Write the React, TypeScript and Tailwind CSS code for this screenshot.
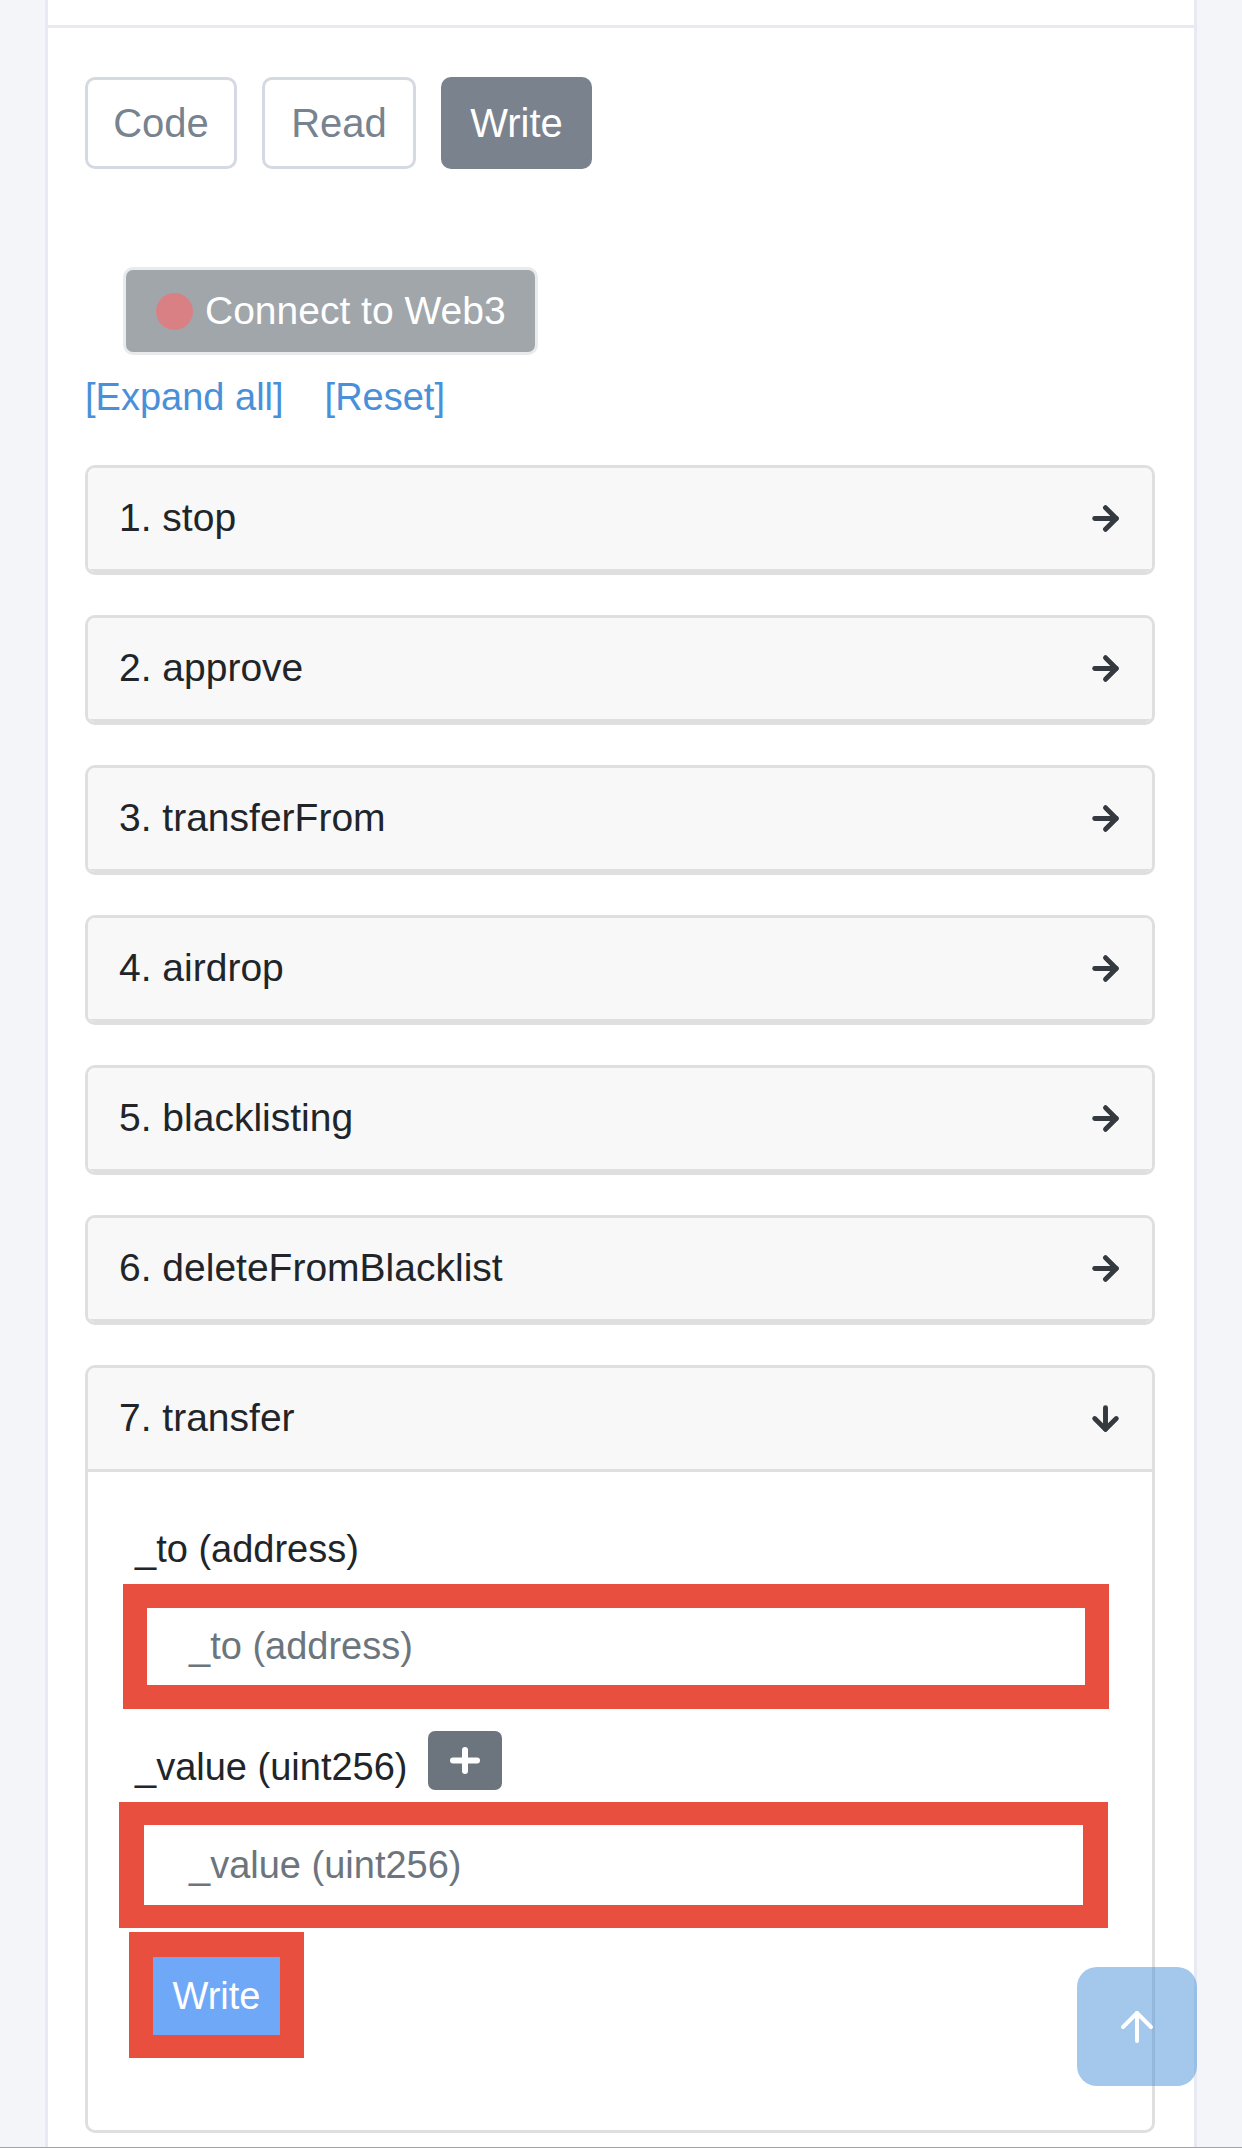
import { ArrowDown, ArrowRight, ArrowUp } from "lucide-react";

const methods = [
  "1. stop",
  "2. approve",
  "3. transferFrom",
  "4. airdrop",
  "5. blacklisting",
  "6. deleteFromBlacklist",
];

const tabs = [
  { label: "Code", w: "w-[152px]", active: false },
  { label: "Read", w: "w-[154px]", active: false },
  { label: "Write", w: "w-[151px]", active: true },
];

const MethodHeader = ({ name, open }: { name: string; open?: boolean }) => (
  <div className="h-[104px] flex items-center justify-between pl-[31px] pr-[28px] bg-[#f8f8f8] border-b-[3px] border-[#dfdfdf]">
    <span className="text-[39px] text-[#212529]">{name}</span>
    {open ? (
      <ArrowDown size={37} strokeWidth={3.2} className="text-[#343a40]" />
    ) : (
      <ArrowRight size={37} strokeWidth={3.2} className="text-[#343a40]" />
    )}
  </div>
);

const PlusIcon = () => (
  <svg width="30" height="27" viewBox="0 0 30 27">
    <line x1="3" y1="13.5" x2="27" y2="13.5" stroke="white" strokeWidth="6" strokeLinecap="round" />
    <line x1="15" y1="3" x2="15" y2="24" stroke="white" strokeWidth="6" strokeLinecap="round" />
  </svg>
);

export default function App() {
  return (
    <div className="relative h-[2148px] overflow-hidden bg-[#f4f5f8] border-b border-[#a3a3a3] font-['Liberation_Sans',Arial,sans-serif]">
      <div className="mx-[45px] h-full bg-white border-x-[3px] border-[#e7eaf3]">
        <div className="h-[25px]" />
        <div className="h-[3px] bg-[#e7eaf3]" />

        <div className="pl-[37px] pr-[39px] pt-[49px]">
          {/* tabs */}
          <div className="flex gap-[25px]">
            {tabs.map((t) => (
              <div
                key={t.label}
                className={
                  t.active
                    ? `${t.w} h-[92px] rounded-[10px] bg-[#7a828e] text-white text-[40px] flex items-center justify-center`
                    : `${t.w} h-[92px] rounded-[10px] border-[3px] border-[#d5dae2] text-[#77838f] text-[40px] flex items-center justify-center`
                }
              >
                {t.label}
              </div>
            ))}
          </div>

          {/* connect */}
          <div className="mt-[98px] ml-[38px] w-[415px] h-[88px] rounded-[10px] border-[3px] border-[#e9eaec] bg-[#a1a6aa] flex items-center pl-[30px] gap-[12px]">
            <span className="w-[37px] h-[37px] rounded-full bg-[#d98085]" />
            <span className="text-white text-[39px]">Connect to Web3</span>
          </div>

          <div className="mt-[13px] h-[58px] flex items-center gap-[41px] text-[38px] text-[#4a90d9]">
            <span>[Expand all]</span>
            <span>[Reset]</span>
          </div>

          {/* methods */}
          <div className="mt-[39px] flex flex-col gap-[40px]">
            {methods.map((m) => (
              <div key={m} className="rounded-[10px] border-[3px] border-[#dfdfdf] overflow-hidden">
                <MethodHeader name={m} />
              </div>
            ))}

            <div className="rounded-[10px] border-[3px] border-[#dfdfdf] overflow-hidden bg-white">
              <MethodHeader name="7. transfer" open />
              <div className="pt-[48px] pb-[72px] pl-[35px]">
                <div className="ml-[12px] h-[58px] leading-[58px] text-[38px] text-[#212529]">_to (address)</div>

                <div className="mt-[6px] w-[986px] h-[125px] bg-[#e94f3f] p-[24px]">
                  <div className="h-[77px] bg-white pl-[42px] flex items-center text-[38px] text-[#6c757d]">
                    _to (address)
                  </div>
                </div>

                <div className="mt-[22px] h-[59px] flex items-end">
                  <span className="ml-[12px] leading-[46px] text-[38px] text-[#212529]">_value (uint256)</span>
                  <span className="ml-[20px] w-[74px] h-[59px] rounded-[7px] bg-[#6c757d] flex items-center justify-center">
                    <PlusIcon />
                  </span>
                </div>

                <div className="mt-[12px] -ml-[4px] w-[989px] h-[126px] bg-[#e94f3f] pt-[23px] px-[25px]">
                  <div className="h-[80px] bg-white pl-[45px] flex items-center text-[38px] text-[#6c757d]">
                    _value (uint256)
                  </div>
                </div>

                <div className="mt-[4px] ml-[6px] w-[175px] h-[126px] bg-[#e94f3f] pt-[25px] px-[24px]">
                  <div className="h-[78px] bg-[#6ea8f7] flex items-center justify-center text-white text-[38px]">
                    Write
                  </div>
                </div>
              </div>
            </div>
          </div>
        </div>
      </div>

      {/* back to top */}
      <div className="absolute right-[45px] bottom-[61px] w-[120px] h-[119px] rounded-[20px] bg-[#4a90d9]/50 flex items-center justify-center">
        <ArrowUp size={48} strokeWidth={2} className="text-white" />
      </div>
    </div>
  );
}
